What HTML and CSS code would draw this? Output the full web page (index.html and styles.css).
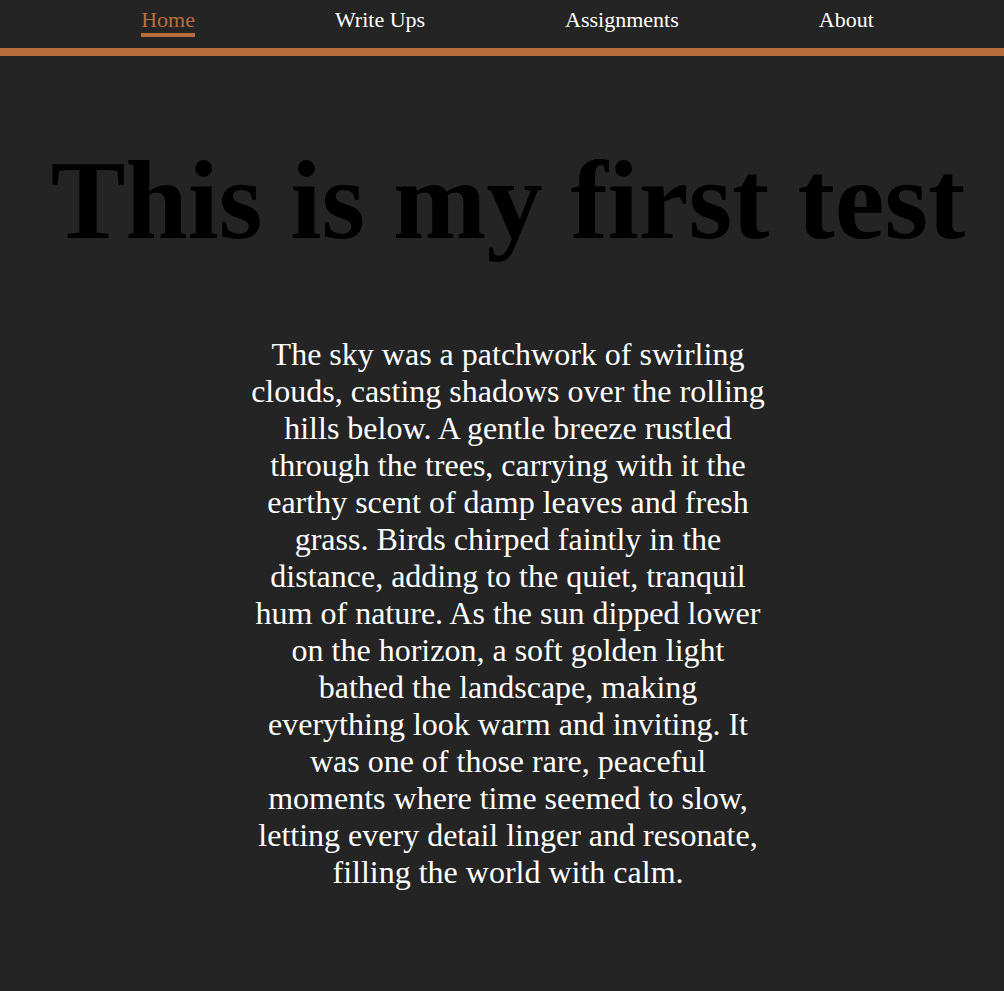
FILE: index.html
```html
<!DOCTYPE html>
<html>
<head>
<meta charset="utf-8">
<link rel="stylesheet" href="styles.css">
</head>
<body>
<header class="site-header">
  <nav class="nav">
    <a class="nav-link active" href="#">Home</a>
    <a class="nav-link" href="#">Write Ups</a>
    <a class="nav-link" href="#">Assignments</a>
    <a class="nav-link" href="#">About</a>
  </nav>
</header>
<main class="content">
  <h1 class="title">This is my first test</h1>
  <p class="story">The sky was a patchwork of swirling clouds, casting shadows over the rolling hills below. A gentle breeze rustled through the trees, carrying with it the earthy scent of damp leaves and fresh grass. Birds chirped faintly in the distance, adding to the quiet, tranquil hum of nature. As the sun dipped lower on the horizon, a soft golden light bathed the landscape, making everything look warm and inviting. It was one of those rare, peaceful moments where time seemed to slow, letting every detail linger and resonate, filling the world with calm.</p>
</main>
</body>
</html>
```
FILE: styles.css
```css
html, body {
  margin: 0;
  padding: 0;
  background: #242424;
  font-family: "Liberation Serif", "Times New Roman", serif;
}
.site-header {
  height: 48px;
  border-bottom: 8px solid #b86d3c;
}
.nav {
  display: flex;
  justify-content: center;
  gap: 140px;
  padding-left: 11px;
  padding-top: 8px;
}
.nav-link {
  color: #ffffff;
  text-decoration: none;
  font-size: 22px;
  line-height: 24px;
  padding-bottom: 1px;
  border-bottom: 4px solid transparent;
}
.nav-link.active {
  color: #b86d3c;
  border-bottom-color: #b86d3c;
}
.content {
  padding: 0 8px 0 20px;
  text-align: center;
}
.title {
  margin: 80px 0 0;
  font-size: 112px;
  font-weight: bold;
  color: #000000;
  line-height: 1.15;
}
.story {
  width: 520px;
  margin: 71px auto 0;
  font-size: 32px;
  color: #ffffff;
  line-height: 37px;
}
```
